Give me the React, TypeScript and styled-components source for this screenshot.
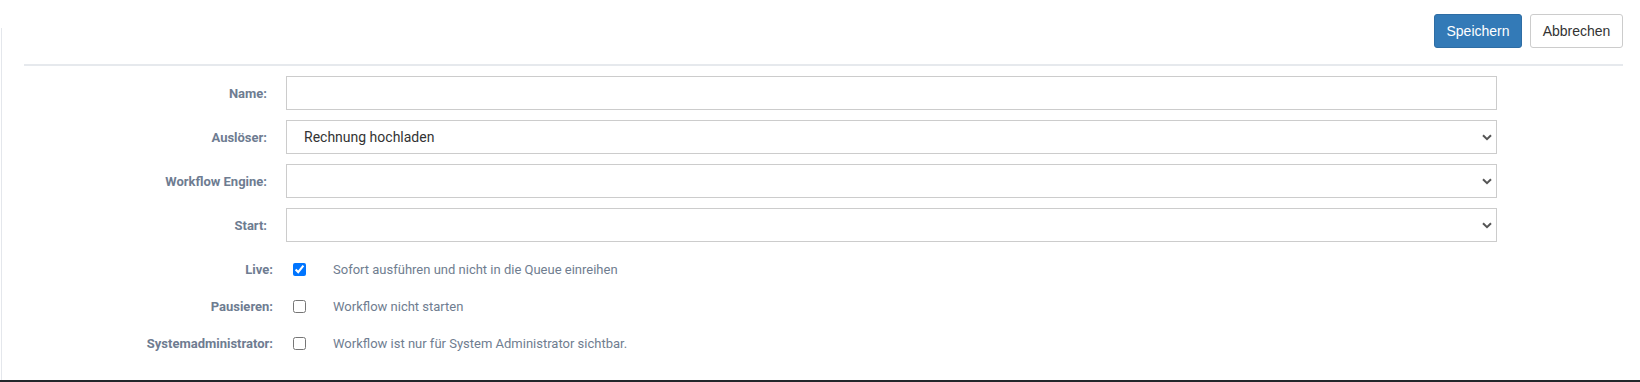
import * as React from 'react'
import styled, { createGlobalStyle } from 'styled-components'

const GlobalStyle = createGlobalStyle`
  html, body {
    margin: 0;
    padding: 0;
    background: #fff;
  }
  body {
    font-family: Roboto, "Liberation Sans", Arial, sans-serif;
  }
`

type Field = {
  label: string
  kind: 'text' | 'select'
  value?: string
}

type Flag = {
  label: string
  hint: string
  checked: boolean
}

const fields: Field[] = [
  { label: 'Name:', kind: 'text' },
  { label: 'Auslöser:', kind: 'select', value: 'Rechnung hochladen' },
  { label: 'Workflow Engine:', kind: 'select' },
  { label: 'Start:', kind: 'select' },
]

const flags: Flag[] = [
  { label: 'Live:', hint: 'Sofort ausführen und nicht in die Queue einreihen', checked: true },
  { label: 'Pausieren:', hint: 'Workflow nicht starten', checked: false },
  { label: 'Systemadministrator:', hint: 'Workflow ist nur für System Administrator sichtbar.', checked: false },
]

const Chevron: React.FC = () => (
  <ChevronIcon width="10" height="7" viewBox="0 0 10 7">
    <path d="M1 1.2 L5 5.2 L9 1.2" fill="none" stroke="#555" strokeWidth="2" />
  </ChevronIcon>
)

export default function App() {
  return (
    <>
      <GlobalStyle />
      <Page>
        <Toolbar>
          <PrimaryButton type="button">Speichern</PrimaryButton>
          <DefaultButton type="button">Abbrechen</DefaultButton>
        </Toolbar>
        <Divider />
        <Form>
          {fields.map((f) => (
            <FieldRow key={f.label}>
              <Label>{f.label}</Label>
              {f.kind === 'text' ? (
                <TextInput type="text" defaultValue="" />
              ) : (
                <SelectWrap>
                  <Select defaultValue={f.value ?? ''}>
                    <option value={f.value ?? ''}>{f.value ?? ''}</option>
                  </Select>
                  <Chevron />
                </SelectWrap>
              )}
            </FieldRow>
          ))}
          <Flags>
            {flags.map((f) => (
              <FlagRow key={f.label}>
                <FlagLabel>{f.label}</FlagLabel>
                <Checkbox type="checkbox" defaultChecked={f.checked} />
                <Hint>{f.hint}</Hint>
              </FlagRow>
            ))}
          </Flags>
        </Form>
      </Page>
    </>
  )
}

const Page = styled.div`
  position: relative;
  width: 1640px;
  height: 382px;
  box-sizing: border-box;
  border-bottom: 2px solid #23272b;
  background: #fff;

  &::before {
    content: '';
    position: absolute;
    left: 1px;
    top: 28px;
    bottom: 0;
    width: 1px;
    background: #e4e7ec;
  }
`

const Toolbar = styled.div`
  display: flex;
  justify-content: flex-end;
  gap: 8px;
  padding: 14px 17px 0 0;
`

const ButtonBase = styled.button`
  height: 34px;
  padding: 0 11px;
  border-radius: 3px;
  font-family: "Liberation Sans", Arial, sans-serif;
  font-size: 14px;
  cursor: pointer;
`

const PrimaryButton = styled(ButtonBase)`
  width: 88px;
  background: #337ab7;
  border: 1px solid #2e6da4;
  color: #fff;
`

const DefaultButton = styled(ButtonBase)`
  width: 93px;
  background: #fff;
  border: 1px solid #ccc;
  color: #333;
`

const Divider = styled.hr`
  margin: 16px 17px 0 24px;
  border: 0;
  border-top: 2px solid #e6e9ed;
`

const Form = styled.div`
  display: flex;
  flex-direction: column;
  padding-top: 10px;
`

const FieldRow = styled.div`
  display: grid;
  grid-template-columns: 286px 1211px;
  align-items: center;
  height: 34px;
  margin-bottom: 10px;
`

const Label = styled.label`
  text-align: right;
  padding-right: 19px;
  font-size: 13px;
  font-weight: 700;
  color: #6e7c91;
`

const controlStyles = `
  box-sizing: border-box;
  width: 100%;
  height: 34px;
  border: 1px solid #ccc;
  border-radius: 0;
  background: #fff;
  font-family: Roboto, "Liberation Sans", Arial, sans-serif;
  font-size: 14px;
  color: #333;
  outline: none;
`

const TextInput = styled.input`
  ${controlStyles}
  padding: 0 12px;
`

const SelectWrap = styled.div`
  position: relative;
  width: 100%;
`

const Select = styled.select`
  ${controlStyles}
  appearance: none;
  -webkit-appearance: none;
  padding: 0 30px 0 17px;
`

const ChevronIcon = styled.svg`
  position: absolute;
  right: 5px;
  top: 14px;
  pointer-events: none;
`

const Flags = styled.div`
  display: flex;
  flex-direction: column;
  gap: 17px;
  padding-top: 7px;
`

const FlagRow = styled.div`
  display: grid;
  grid-template-columns: 286px 13px auto;
  align-items: center;
  height: 20px;
`

const FlagLabel = styled(Label)`
  padding-right: 13px;
`

const Checkbox = styled.input`
  width: 13px;
  height: 13px;
  margin: 0 0 0 7px;
  accent-color: #0075ff;
`

const Hint = styled.span`
  padding-left: 34px;
  font-size: 13px;
  color: #6f7d90;
`
